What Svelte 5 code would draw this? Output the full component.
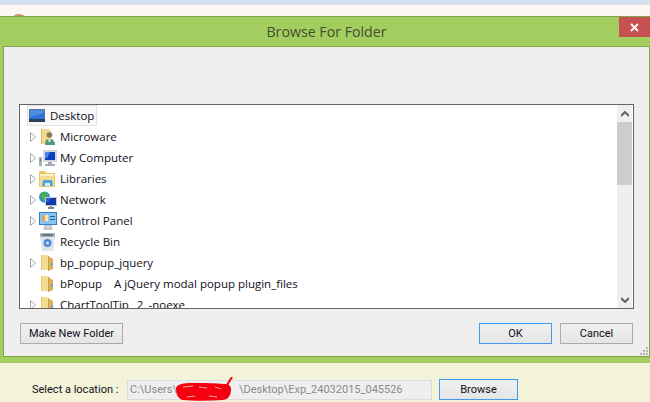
<script>
	const rows = [
		{ label: 'Microware', icon: 'user', arrow: true },
		{ label: 'My Computer', icon: 'computer', arrow: true },
		{ label: 'Libraries', icon: 'library', arrow: true },
		{ label: 'Network', icon: 'network', arrow: true },
		{ label: 'Control Panel', icon: 'panel', arrow: true },
		{ label: 'Recycle Bin', icon: 'bin', arrow: false },
		{ label: 'bp_popup_jquery', icon: 'folder', arrow: true },
		{ label: 'bPopup    A jQuery modal popup plugin_files', icon: 'folder', arrow: false },
		{ label: 'ChartToolTip_ 2_-noexe', icon: 'folder', arrow: true }
	];
</script>

{#snippet folderShape()}
	<path d="M2 1h6l1 1v14H2z" fill="#f4dc90" />
	<path d="M2 1h1v15H2z" fill="#e6c470" />
	<path d="M9 2l5 3v10l-5 2z" fill="#dcb254" />
	<path d="M9 2h1v15H9z" fill="#c9a04c" />
	<path d="M12 9h2v3h-2z" fill="#6fa6d8" />
{/snippet}

{#snippet rowIcon(name)}
	<svg class="icon" viewBox="0 0 18 18" width="18" height="18">
		{#if name === 'user'}
			<path d="M2 1h8l2 2v13H2z" fill="#f3d98c" />
			<path d="M2 1h1v15H2z" fill="#dcb860" />
			<circle cx="10.500" cy="7" r="2.800" fill="#8a7658" />
			<path d="M6 17c0-5 2-6 4.500-6s5.500 1 5.500 6z" fill="#4d9a7c" />
			<path d="M9.500 11h2v3h-2z" fill="#e8e8e0" />
		{:else if name === 'computer'}
			<rect x="0" y="8" width="3" height="9" fill="#a4adb5" />
			<rect x="1" y="10" width="1" height="2" fill="#4f9a50" />
			<rect x="4" y="1" width="14" height="12" fill="#d3d8de" />
			<rect x="6" y="3" width="10" height="8" fill="#0e3fc0" />
			<path d="M6 3h5l-3 6H6z" fill="#4f86e8" />
			<path d="M9 13h4v2h3v2H6v-2h3z" fill="#a3abb3" />
		{:else if name === 'library'}
			<path d="M0 1h6l2 2h8v14H0z" fill="#e9c768" />
			<path d="M1 4h14v2H1z" fill="#fdf3c8" />
			<path d="M1 6h14v10H1z" fill="#f5dc92" />
			<path d="M4 10h9l1 6H3z" fill="#4ea3dc" />
			<path d="M6 13h5v3H6z" fill="#d9ecf8" />
		{:else if name === 'network'}
			<circle cx="5.500" cy="6" r="5.500" fill="#2f8ed0" />
			<path d="M2 2l5-1 2 3-3 2 1 4-3-1-2-3z" fill="#4fae44" />
			<rect x="6" y="6" width="12" height="9" fill="#c3cad2" />
			<rect x="7" y="7" width="10" height="7" fill="#0e37b0" />
			<path d="M7 7h5l-2 4H7z" fill="#2f5ed0" />
			<path d="M11 15h2v1h2v2H9v-2h2z" fill="#7d8791" />
		{:else if name === 'panel'}
			<rect x="0" y="0" width="18" height="13" fill="#2f7fc6" />
			<rect x="1" y="1" width="16" height="11" fill="#8cc4ec" />
			<circle cx="6" cy="6" r="3" fill="#f2a03c" />
			<path d="M6 3h3v6H6z" fill="#fff" opacity=".7" />
			<path d="M11 4h5v1h-5zM11 7h5v1h-5z" fill="#2a5f98" />
			<path d="M5 13h8v2l1 3H4l1-3z" fill="#c8ccd0" />
		{:else if name === 'bin'}
			<path d="M1 3h15l-2 15H3z" fill="#dde4ea" />
			<path d="M1 0h15v4H1z" fill="#a9b4bd" />
			<path d="M3 1h11v2H3z" fill="#6c7880" />
			<circle cx="8.500" cy="10" r="4" fill="#4f8ad8" />
			<circle cx="8.500" cy="10" r="1.500" fill="#d5e4f6" />
		{:else}
			{@render folderShape()}
		{/if}
	</svg>
{/snippet}

<div class="page">
	<div class="topstrip"></div>
	<div class="behind"><span class="peek"></span></div>

	<div class="dialog">
		<div class="titlebar">
			<span class="title">Browse For Folder</span>
			<button class="close" aria-label="Close">
				<svg viewBox="0 0 9 9" width="9" height="9">
					<path d="M1 1l7 7M8 1L1 8" stroke="#fff" stroke-width="1.800" />
				</svg>
			</button>
		</div>

		<div class="client">
			<div class="tree">
				<div class="rows">
					<div class="row">
						<span class="selected">
							<svg class="icon" viewBox="0 0 16 13" width="16" height="13">
								<rect x="0" y="0" width="16" height="13" fill="#5b6f87" />
								<rect x="1" y="1" width="14" height="9" fill="#2f6fd6" />
								<path d="M1 1h14v3L1 8z" fill="#4c8ee6" />
								<rect x="0" y="10" width="16" height="3" fill="#2c3f5c" />
							</svg>
							<span>Desktop</span>
						</span>
					</div>
					{#each rows as row}
						<div class="row">
							<span class="arrow">
								{#if row.arrow}
									<svg viewBox="0 0 6 10" width="6" height="10">
										<path d="M.5.5l5 4.500-5 4.500z" fill="#fff" stroke="#a6a6a6" />
									</svg>
								{/if}
							</span>
							{@render rowIcon(row.icon)}
							<span class="label">{row.label}</span>
						</div>
					{/each}
				</div>
				<div class="scrollbar">
					<span class="sb-btn">
						<svg viewBox="0 0 8 6" width="8" height="6"><path d="M0 5l4-4 4 4" fill="none" stroke="#606060" stroke-width="2" /></svg>
					</span>
					<div class="sb-track"><div class="sb-thumb"></div></div>
					<span class="sb-btn">
						<svg viewBox="0 0 8 6" width="8" height="6"><path d="M0 1l4 4 4-4" fill="none" stroke="#606060" stroke-width="2" /></svg>
					</span>
				</div>
			</div>

			<div class="actions">
				<button class="btn make">Make New Folder</button>
				<div class="right">
					<button class="btn ok default">OK</button>
					<button class="btn cancel">Cancel</button>
				</div>
			</div>

			<svg class="grip" viewBox="0 0 8 8" width="8" height="8">
				<path d="M6 0h2v2H6zM3 3h2v2H3zM6 3h2v2H6zM0 6h2v2H0zM3 6h2v2H3zM6 6h2v2H6z" fill="#b5b5b5" />
			</svg>
		</div>
	</div>

	<div class="footer">
		<span class="loc-label">Select a location :</span>
		<div class="path">
			<span>C:\Users\</span><span class="hidden-name">username</span><span>\Desktop\Exp_24032015_045526</span>
			<svg class="scribble" viewBox="0 0 60 25" width="60" height="25">
				<path d="M1 11c1-4 8-5 16-5 12 0 24 0 32 1 5 0 7 2 7 5 0 6-2 10-8 11-14 1-30 1-40 0-5-1-7-6-7-12z" fill="#f5000f" />
				<path d="M52 8l5-8" stroke="#f5000f" stroke-width="2" fill="none" />
				<path d="M8 10l10-1M24 10l8 1M40 10l6 2M12 20l8-1M34 19l8 1" stroke="#f7a8a8" stroke-width="1" fill="none" />
			</svg>
		</div>
		<button class="btn browse default">Browse</button>
	</div>
</div>

<style>
	:global(body) {
		margin: 0;
		background: #f3f3da;
	}

	.page {
		width: 650px;
		height: 402px;
		overflow: hidden;
		font-family: 'Open Sans', 'Noto Sans', sans-serif;
		font-size: 11.5px;
		color: #10101a;
	}

	.topstrip {
		height: 5px;
		background: #d5e3f0;
	}

	.behind {
		height: 11px;
		background: #fdf8f5;
		position: relative;
		overflow: hidden;
	}

	.peek {
		position: absolute;
		left: 13px;
		top: 9px;
		width: 12px;
		height: 6px;
		border-radius: 50%;
		background: #c89a66;
	}

	.dialog {
		height: 347px;
		box-sizing: border-box;
		background: #a2cd5f;
		border-top: 1px solid #7fa64a;
	}

	.titlebar {
		height: 29px;
		display: flex;
		align-items: center;
		justify-content: center;
		position: relative;
	}

	.title {
		font-size: 14.2px;
		color: #434f2e;
		margin-left: 3px;
	}

	.close {
		position: absolute;
		right: 0;
		top: 0;
		width: 31px;
		height: 20px;
		padding: 0;
		border: none;
		background: #c75050;
		display: flex;
		align-items: center;
		justify-content: center;
	}

	.client {
		margin-left: 3px;
		height: 311px;
		box-sizing: border-box;
		background: #efefef;
		border: 1px solid #7fa64a;
		padding: 57px 15px 0 15px;
		position: relative;
	}

	.tree {
		height: 205px;
		box-sizing: border-box;
		background: #fff;
		border: 1px solid #646464;
		display: flex;
		overflow: hidden;
	}

	.rows {
		flex: 1;
		padding-left: 7px;
		min-width: 0;
	}

	.row {
		height: 21px;
		display: flex;
		align-items: center;
		white-space: pre;
	}

	.selected {
		height: 21px;
		width: 70px;
		box-sizing: border-box;
		border: 1px solid #e2e2e2;
		background: #f8f8f8;
		display: flex;
		align-items: center;
		gap: 5px;
		padding-left: 1px;
	}

	.arrow {
		width: 9px;
		flex: none;
		display: flex;
		margin-left: 3px;
	}

	.icon {
		flex: none;
	}

	.label {
		margin-left: 3px;
	}

	.scrollbar {
		width: 15px;
		flex: none;
		background: #efefef;
		display: flex;
		flex-direction: column;
		border-right: 1px solid #fff;
	}

	.sb-btn {
		height: 17px;
		flex: none;
		display: flex;
		align-items: center;
		justify-content: center;
	}

	.sb-track {
		flex: 1;
	}

	.sb-thumb {
		height: 63px;
		background: #cdcdcd;
	}

	.actions {
		margin: 14px 1px 0 1px;
		display: flex;
		justify-content: space-between;
	}

	.right {
		display: flex;
		gap: 8px;
	}

	.btn {
		height: 21px;
		box-sizing: border-box;
		padding: 0;
		font-family: Roboto, 'Open Sans', sans-serif;
		font-size: 11px;
		color: #10101a;
		border: 1px solid #ababab;
		background: linear-gradient(#f0f0f0, #e5e5e5);
	}

	.btn.default {
		border-color: #3d9bf0;
	}

	.make {
		width: 103px;
	}

	.ok,
	.cancel {
		width: 73px;
	}

	.grip {
		position: absolute;
		right: 1px;
		bottom: 1px;
	}

	.footer {
		height: 39px;
		box-sizing: border-box;
		display: flex;
		align-items: flex-start;
		padding: 16px 0 0 32px;
		background: #f3f3da;
		font-family: Roboto, 'Open Sans', sans-serif;
		font-size: 11px;
	}

	.loc-label {
		width: 95px;
		flex: none;
		white-space: nowrap;
		line-height: 22px;
	}

	.path {
		width: 305px;
		height: 20px;
		margin-top: 1px;
		flex: none;
		box-sizing: border-box;
		border: 1px solid #dcdcdc;
		background: #efefef;
		color: #8a8a8a;
		padding-left: 2px;
		line-height: 18px;
		white-space: nowrap;
		position: relative;
		display: flex;
	}

	.hidden-name {
		width: 62px;
		overflow: hidden;
		color: transparent;
	}

	.scribble {
		position: absolute;
		left: 47px;
		top: -4px;
	}

	.browse {
		width: 79px;
		margin-left: 7px;
	}
</style>
